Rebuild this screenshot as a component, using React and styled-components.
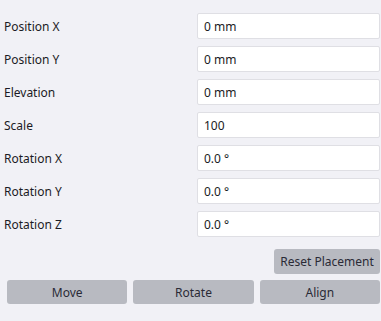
import React from "react";
import styled, { createGlobalStyle } from "styled-components";

const Global = createGlobalStyle`
  html, body { margin: 0; padding: 0; background: #f1f1f6; }
  body { font-family: "Noto Sans", "Open Sans", sans-serif; font-size: 12px; color: #1b1b24; }
`;

const Panel = styled.div`
  width: 381px;
  height: 321px;
  box-sizing: border-box;
  padding: 13px 1px 0 0;
  display: flex;
  flex-direction: column;
`;

const Fields = styled.div`
  display: flex;
  flex-direction: column;
  gap: 7px;
`;

const Row = styled.div`
  display: grid;
  grid-template-columns: 197px 1fr;
  align-items: center;
  height: 26px;
`;

const Label = styled.span`
  padding-left: 4px;
  font-size: 12px;
  color: #1b1b24;
`;

const Input = styled.div`
  height: 26px;
  box-sizing: border-box;
  background: #ffffff;
  border: 1px solid #dfdfe4;
  border-radius: 2px;
  padding: 0 6px;
  display: flex;
  align-items: center;
  font-size: 12px;
  color: #1b1b24;
`;

const ResetRow = styled.div`
  display: flex;
  justify-content: flex-end;
  margin-top: 12px;
`;

const Button = styled.button`
  height: ${(p) => p.$h || 24}px;
  border: none;
  border-radius: 3px;
  background: #b8bac1;
  color: #2a2a36;
  font-family: "Noto Sans", "Open Sans", sans-serif;
  font-size: 12px;
  padding: 0;
  white-space: nowrap;
  width: ${(p) => (p.$w ? p.$w + "px" : "auto")};
  cursor: pointer;
`;

const ActionRow = styled.div`
  display: grid;
  grid-template-columns: repeat(3, 1fr);
  gap: 6px;
  margin-top: 6px;
  padding-left: 7px;
`;

const fields = [
  ["Position X", "0 mm"],
  ["Position Y", "0 mm"],
  ["Elevation", "0 mm"],
  ["Scale", "100"],
  ["Rotation X", "0.0 °"],
  ["Rotation Y", "0.0 °"],
  ["Rotation Z", "0.0 °"],
];

export default function App() {
  return (
    <>
      <Global />
      <Panel>
        <Fields>
          {fields.map(([l, v]) => (
            <Row key={l}>
              <Label>{l}</Label>
              <Input>{v}</Input>
            </Row>
          ))}
        </Fields>
        <ResetRow>
          <Button $h={25} $w={106}>Reset Placement</Button>
        </ResetRow>
        <ActionRow>
          <Button>Move</Button>
          <Button>Rotate</Button>
          <Button>Align</Button>
        </ActionRow>
      </Panel>
    </>
  );
}
